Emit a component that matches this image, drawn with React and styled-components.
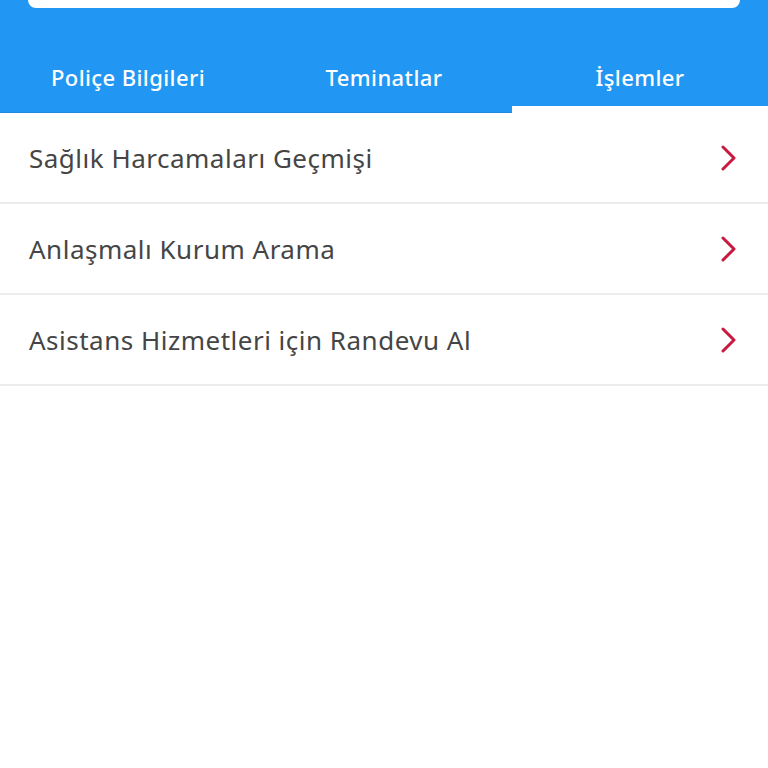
import React from "react";
import styled, { createGlobalStyle } from "styled-components";

const Global = createGlobalStyle`
  html, body { margin: 0; padding: 0; background: #fff; }
  body { font-family: "Noto Sans", "Open Sans", sans-serif; }
`;

const Header = styled.header`
  background: #2196f3;
  display: flex;
  flex-direction: column;
  border-bottom: 1px solid #1f8ae0;
`;

const SearchCard = styled.div`
  margin: 0 28px;
  height: 8px;
  background: #fff;
  border-radius: 0 0 8px 8px;
`;

const Tabs = styled.nav`
  display: grid;
  grid-template-columns: repeat(3, 1fr);
  margin-top: 50px;
`;

const Tab = styled.div`
  display: flex;
  justify-content: center;
  align-items: center;
  height: 55px;
  color: #fff;
  font-size: 22px;
  font-weight: 500;
  letter-spacing: 0.4px;
  padding-bottom: 10px;
  box-sizing: border-box;
  border-bottom: 7px solid ${(p) => (p.$active ? "#fff" : "transparent")};
  margin-bottom: -1px;
`;

const List = styled.ul`
  list-style: none;
  margin: 0;
  padding: 0;
`;

const Row = styled.li`
  display: flex;
  align-items: center;
  justify-content: space-between;
  height: 89px;
  padding: 0 30px 0 29px;
  border-bottom: 2px solid #ececec;
  color: #454545;
  font-size: 26px;
  letter-spacing: 0.5px;
`;

const Chevron = () => (
  <svg width="18" height="26" viewBox="0 0 18 26" fill="none">
    <path d="M3 2 L14 13 L3 24" stroke="#c8193f" strokeWidth="3" strokeLinecap="round" strokeLinejoin="round" />
  </svg>
);

const items = [
  "Sağlık Harcamaları Geçmişi",
  "Anlaşmalı Kurum Arama",
  "Asistans Hizmetleri için Randevu Al",
];

export default function App() {
  return (
    <>
      <Global />
      <Header>
        <SearchCard />
        <Tabs>
          <Tab>Poliçe Bilgileri</Tab>
          <Tab>Teminatlar</Tab>
          <Tab $active>İşlemler</Tab>
        </Tabs>
      </Header>
      <List>
        {items.map((t) => (
          <Row key={t}>
            <span>{t}</span>
            <Chevron />
          </Row>
        ))}
      </List>
    </>
  );
}
